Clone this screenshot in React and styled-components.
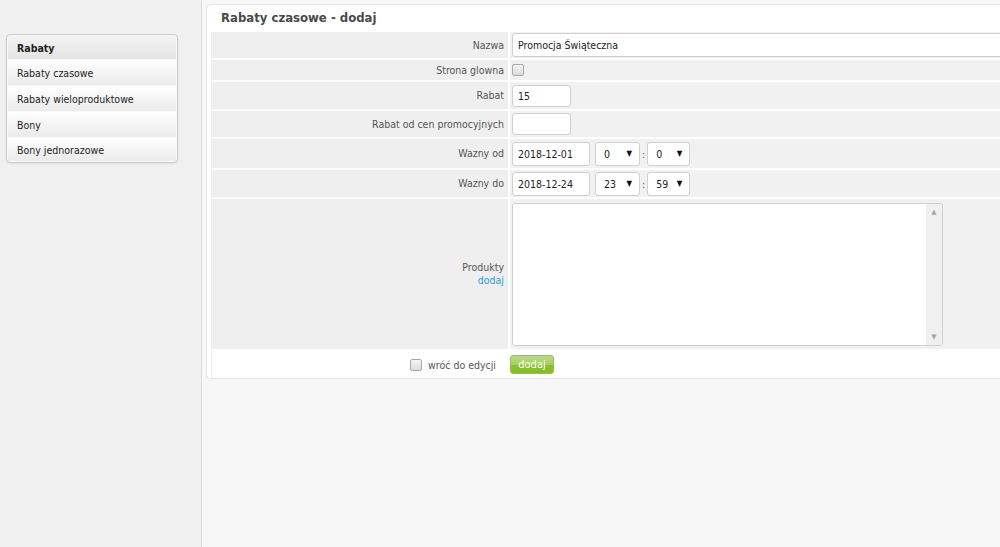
import React from "react";
import styled, { createGlobalStyle } from "styled-components";

// STYLES

const GlobalStyle = createGlobalStyle`
  html, body {
    margin: 0;
    padding: 0;
    background: #f7f7f7;
    overflow: hidden;
    font-family: "DejaVu Sans Condensed", "DejaVu Sans", "Liberation Sans", sans-serif;
    font-size: 10.5px;
    color: #333;
  }
`;

const Page = styled.div`
  display: flex;
  width: 1000px;
  height: 547px;
`;

const Sidebar = styled.aside`
  width: 202px;
  flex-shrink: 0;
  background: #f0f0f0;
  border-right: 1px solid #dedede;
  padding: 34px 0 0 6px;
  box-sizing: border-box;
`;

const Menu = styled.ul`
  list-style: none;
  margin: 0;
  padding: 1px;
  width: 172px;
  box-sizing: border-box;
  background: #f8f8f8;
  border: 1px solid #cdcdcd;
  border-radius: 4px;
  box-shadow: 0 1px 2px rgba(0, 0, 0, 0.08);
  display: flex;
  flex-direction: column;
  gap: 1px;
`;

const MenuItem = styled.li`
  height: ${(p) => (p.head ? "23px" : "25px")};
  display: flex;
  align-items: center;
  padding-left: 9px;
  border-radius: ${(p) => (p.head ? "3px 3px 0 0" : "0")};
  background: ${(p) =>
    p.head
      ? "linear-gradient(#f3f3f3, #e3e3e3)"
      : "linear-gradient(#ffffff, #ebebeb)"};
  font-weight: ${(p) => (p.head ? "bold" : "normal")};
  color: #222;
  cursor: pointer;

  &:last-child {
    height: 23px;
  }
`;

const Main = styled.main`
  flex: 1;
  padding: 4px 0 0 4px;
  overflow: hidden;
`;

const Panel = styled.section`
  width: 830px;
  background: #fff;
  border: 1px solid #e6e6e6;
  border-radius: 5px;
  padding: 0 0 0 4px;
`;

const PanelTitle = styled.h2`
  margin: 0;
  height: 27px;
  line-height: 25px;
  padding-left: 10px;
  font-size: 13px;
  font-weight: bold;
  color: #4a4a4a;
`;

const Form = styled.div`
  display: grid;
  grid-template-columns: 296px 1fr;
  gap: 2px;
  background: #fff;
  border-left: 1px solid #ececec;
`;

const Label = styled.div`
  height: ${(p) => p.h}px;
  background: #efefef;
  display: flex;
  flex-direction: column;
  justify-content: center;
  align-items: flex-end;
  padding-right: 4px;
  color: #555;
  line-height: 13px;
`;

const Value = styled.div`
  height: ${(p) => p.h}px;
  background: #f1f1f1;
  display: flex;
  align-items: center;
  padding-left: 2px;
  gap: 5px;
`;

const TextInput = styled.input`
  box-sizing: border-box;
  width: ${(p) => p.w || "100%"};
  height: ${(p) => p.h || 24}px;
  border: 1px solid #d0d0d0;
  border-radius: 3px;
  background: #fff;
  padding: 0 5px;
  font: inherit;
  color: #222;
  outline: none;
`;

const Check = styled.input.attrs({ type: "checkbox" })`
  appearance: none;
  margin: 0;
  width: 12px;
  height: 12px;
  border: 1px solid #a9a9a9;
  border-radius: 2px;
  background: linear-gradient(#f4f4f4, #dcdcdc);
`;

const TimeGroup = styled.div`
  display: flex;
  align-items: center;
  gap: 2px;
  color: #555;
`;

const SelectBox = styled.div`
  box-sizing: border-box;
  width: ${(p) => p.w}px;
  height: 24px;
  border: 1px solid #d0d0d0;
  border-radius: 3px;
  background: #fff;
  display: flex;
  align-items: center;
  justify-content: space-between;
  padding: 0 7px 0 8px;
  color: #222;
`;

const Arrow = styled.span`
  font-size: 8px;
  color: #111;
`;

const AreaBox = styled.div`
  box-sizing: border-box;
  width: 431px;
  height: 143px;
  border: 1px solid #cfcfcf;
  border-radius: 3px;
  background: #fff;
  display: flex;
  overflow: hidden;
`;

const Area = styled.textarea`
  flex: 1;
  border: none;
  resize: none;
  outline: none;
  font: inherit;
`;

const Scroll = styled.div`
  width: 16px;
  background: #f0f0f0;
  display: flex;
  flex-direction: column;
  justify-content: space-between;
  align-items: center;
  padding: 4px 0;
  font-size: 7px;
  color: #a3a3a3;
`;

const Link = styled.a`
  color: #2a9fd8;
  text-decoration: none;
`;

const FooterLabel = styled.div`
  height: 27px;
  display: flex;
  align-items: center;
  justify-content: flex-end;
  gap: 6px;
  padding-right: 12px;
  color: #555;
`;

const FooterValue = styled.div`
  height: 27px;
  display: flex;
  align-items: center;
`;

const Button = styled.button`
  width: 44px;
  height: 19px;
  border: 1px solid #95c24a;
  border-radius: 3px;
  background: linear-gradient(#bcd888 0%, #a9cf63 50%, #8cc034 51%, #86bb2d 100%);
  color: #fff;
  font: inherit;
  font-size: 11px;
  padding: 0;
  cursor: pointer;
`;

const Row = ({ label, h, children }) => (
  <>
    <Label h={h}>{label}</Label>
    <Value h={h}>{children}</Value>
  </>
);

const TimePicker = ({ date, hour, minute }) => (
  <>
    <TextInput w="78px" defaultValue={date} />
    <TimeGroup>
      <SelectBox w={45}>
        {hour}
        <Arrow>▼</Arrow>
      </SelectBox>
      :
      <SelectBox w={43}>
        {minute}
        <Arrow>▼</Arrow>
      </SelectBox>
    </TimeGroup>
  </>
);

const menu = [
  "Rabaty czasowe",
  "Rabaty wieloproduktowe",
  "Bony",
  "Bony jednorazowe",
];

const App = () => {
  return (
    <Page>
      <GlobalStyle />
      <Sidebar>
        <Menu>
          <MenuItem head>Rabaty</MenuItem>
          {menu.map((m) => (
            <MenuItem key={m}>{m}</MenuItem>
          ))}
        </Menu>
      </Sidebar>
      <Main>
        <Panel>
          <PanelTitle>Rabaty czasowe - dodaj</PanelTitle>
          <Form>
            <Row label="Nazwa" h={26}>
              <TextInput defaultValue="Promocja Świąteczna" />
            </Row>
            <Row label="Strona glowna" h={20}>
              <Check />
            </Row>
            <Row label="Rabat" h={27}>
              <TextInput w="59px" h={22} defaultValue="15" />
            </Row>
            <Row label="Rabat od cen promocyjnych" h={26}>
              <TextInput w="59px" h={22} />
            </Row>
            <Row label="Wazny od" h={29}>
              <TimePicker date="2018-12-01" hour="0" minute="0" />
            </Row>
            <Row label="Wazny do" h={27}>
              <TimePicker date="2018-12-24" hour="23" minute="59" />
            </Row>
            <Row
              label={
                <>
                  <span>Produkty</span>
                  <Link href="#">dodaj</Link>
                </>
              }
              h={150}
            >
              <AreaBox>
                <Area />
                <Scroll>
                  <span>▲</span>
                  <span>▼</span>
                </Scroll>
              </AreaBox>
            </Row>
            <FooterLabel>
              <Check />
              wróć do edycji
            </FooterLabel>
            <FooterValue>
              <Button>dodaj</Button>
            </FooterValue>
          </Form>
        </Panel>
      </Main>
    </Page>
  );
};

export default App;
